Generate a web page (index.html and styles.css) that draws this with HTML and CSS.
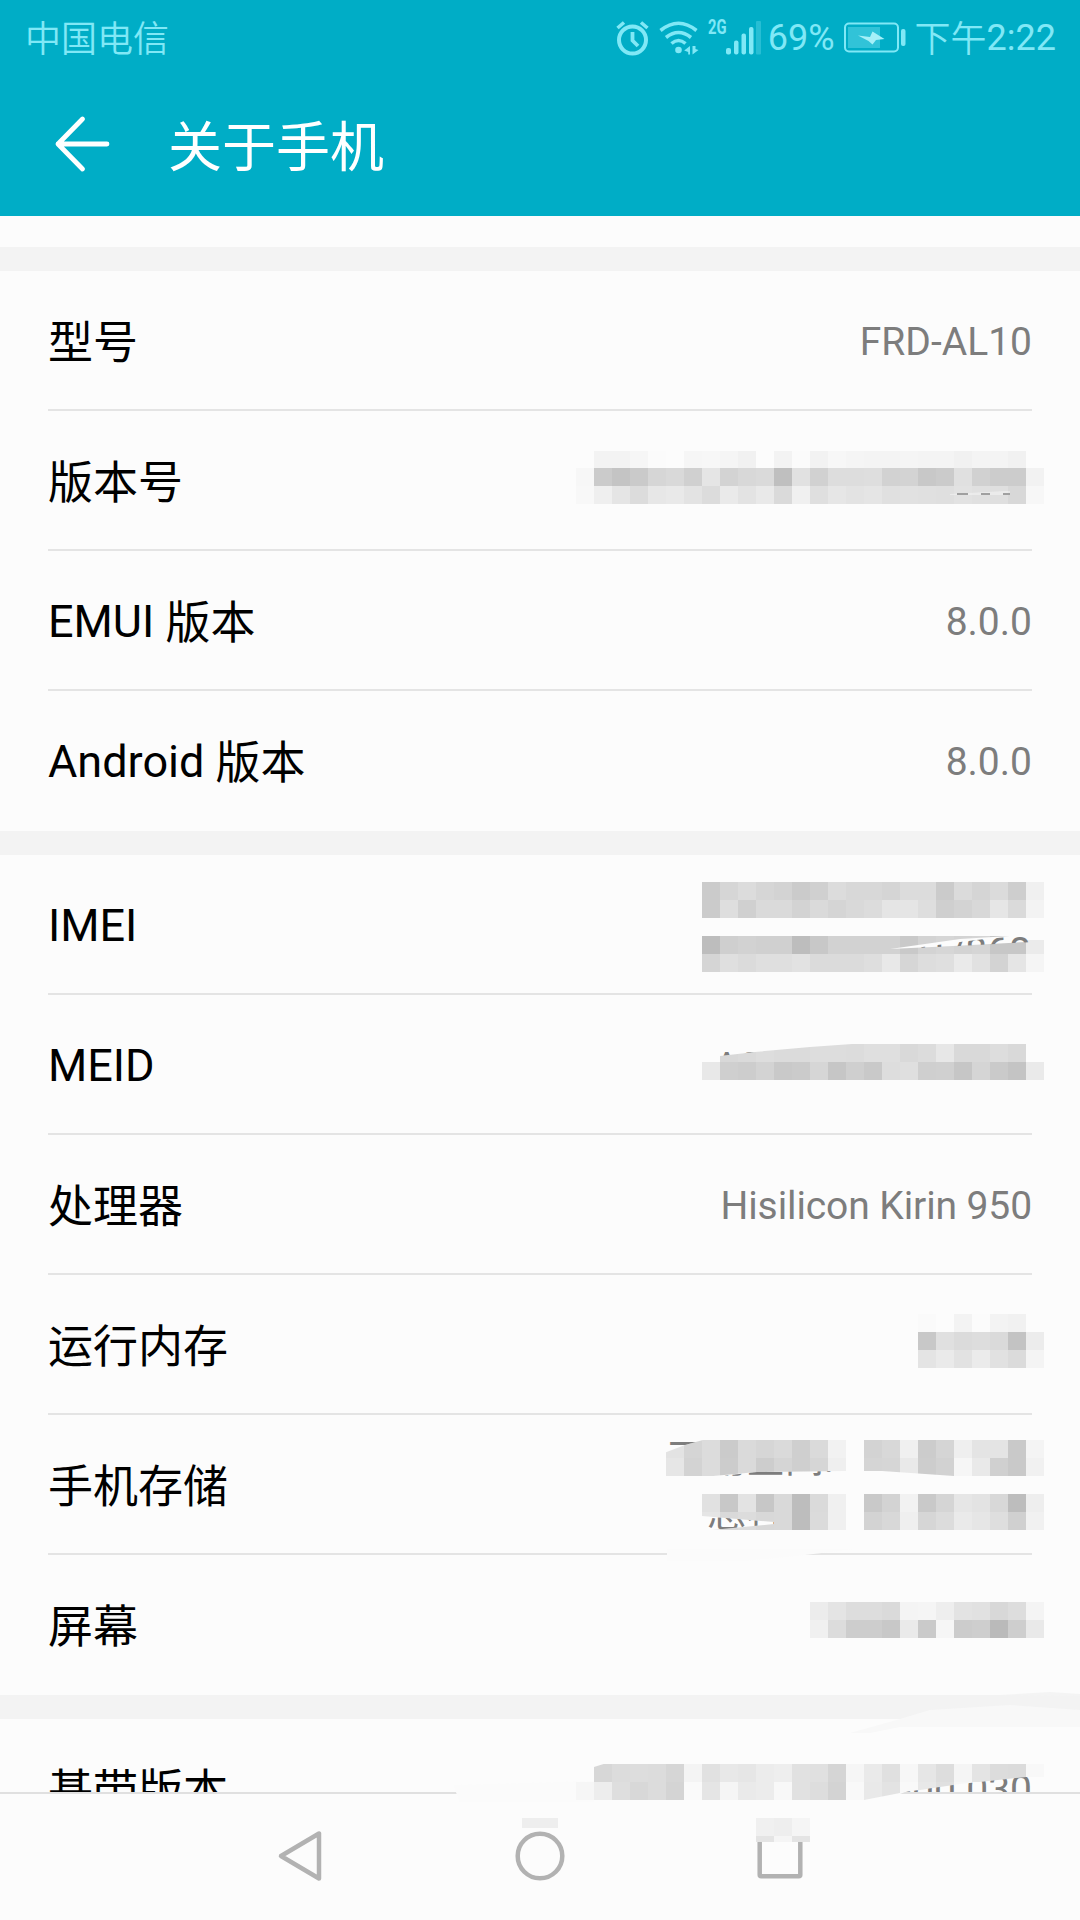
FILE: index.html
```
<!DOCTYPE html>
<html lang="zh-CN">
<head>
    <meta charset="UTF-8">
    <meta name="viewport" content="width=device-width, initial-scale=1.0">
    <title>关于手机</title>
    <link rel="stylesheet" href="styles.css">
</head>
<body>
    <header class="header">
        <div class="status-bar">
            <span class="carrier"><span class="zh">中国电信</span></span>
            <div class="status-icons">
                <svg class="icon-alarm" width="34" height="36" viewBox="0 0 34 36" fill="none" stroke="currentColor" stroke-width="4">
                    <circle cx="16.5" cy="19" r="13.5"/>
                    <path d="M16.5 11v8.500l5.500 5.500" stroke-width="3.800"/>
                    <path d="M1.500 7l6.500-5.500M31.500 7L25 1.500" stroke-width="3.600"/>
                </svg>
                <svg class="icon-wifi" width="40" height="36" viewBox="0 0 40 36" fill="none" stroke="currentColor" stroke-width="3.600">
                    <path d="M1.500 9.500Q19.500-5 37.500 9.500"/>
                    <path d="M7 16.500Q19.500 6.500 32 16.500"/>
                    <path d="M12.500 22.500Q19.500 16.500 26.500 22.500"/>
                    <circle cx="19.500" cy="29" r="3.300" fill="currentColor" stroke="none"/>
                    <path d="M31 25v8.500h-1.800v-2.500l-4-1.500zM33.500 25v8.500l6-4.500-3-1v-3z" fill="currentColor" stroke="none"/>
                </svg>
                <span class="network">2G</span>
                <svg class="icon-signal" width="36" height="36" viewBox="0 0 36 36" fill="currentColor">
                    <rect x="0" y="27" width="5" height="6.500" rx="2"/>
                    <rect x="8" y="19.500" width="4.500" height="14" rx="2"/>
                    <rect x="15.500" y="12.500" width="4.500" height="21" rx="2"/>
                    <rect x="23" y="6" width="4.500" height="27.500" rx="2"/>
                    <rect x="30" y="0" width="5" height="33.500" rx="1" opacity=".3"/>
                </svg>
                <span class="percent">69%</span>
                <svg class="icon-battery" width="63" height="36" viewBox="0 0 63 36">
                    <rect x="1" y="2.500" width="53" height="28" rx="4" fill="none" stroke="currentColor" stroke-width="2"/>
                    <rect x="4" y="6" width="32" height="21" fill="currentColor" opacity=".38"/>
                    <path d="M14 14.500l12 1.500 2.500-5.500 12 7.500-8.500 1-3.500 4.500-4-3.500z" fill="#a6f0f8"/>
                    <rect x="57" y="8" width="4.500" height="17" rx="2" fill="currentColor"/>
                </svg>
                <span class="time"><span class="zh">下午</span>2:22</span>
            </div>
        </div>
        <div class="title-bar">
            <svg class="icon-back" width="58" height="58" viewBox="0 0 58 58" fill="none" stroke="#fff" stroke-width="4.800" stroke-linecap="round" stroke-linejoin="round">
                <path d="M28.500 4L4 29l24.500 25M4 29h49"/>
            </svg>
            <h1>关于手机</h1>
        </div>
    </header>

    <main class="content">
        <section class="group">
            <div class="row"><span class="label"><span class="zh">型号</span></span><span class="value">FRD-AL10</span></div>
            <div class="row"><span class="label"><span class="zh">版本号</span></span></div>
            <div class="row"><span class="label">EMUI <span class="zh">版本</span></span><span class="value">8.0.0</span></div>
            <div class="row"><span class="label">Android <span class="zh">版本</span></span><span class="value">8.0.0</span></div>
        </section>
        <section class="group">
            <div class="row"><span class="label">IMEI</span></div>
            <div class="row"><span class="label">MEID</span></div>
            <div class="row"><span class="label"><span class="zh">处理器</span></span><span class="value cpu">Hisilicon Kirin 950</span></div>
            <div class="row"><span class="label"><span class="zh">运行内存</span></span></div>
            <div class="row"><span class="label"><span class="zh">手机存储</span></span></div>
            <div class="row"><span class="label"><span class="zh">屏幕</span></span></div>
        </section>
        <section class="group">
            <div class="row"><span class="label"><span class="zh">基带版本</span></span></div>
        </section>
    </main>

    <nav class="nav-bar">
        <svg width="50" height="56" viewBox="0 0 50 56"><path d="M43 5.500v45L5 28z"/></svg>
        <svg width="56" height="56" viewBox="0 0 56 56"><circle cx="28" cy="28" r="22.300"/></svg>
        <svg width="56" height="56" viewBox="0 0 56 56"><rect x="5.700" y="7.700" width="40.600" height="40.600" rx="1.500"/></svg>
    </nav>

    <!-- Pixelated censoring over the private values -->
    <svg class="censor" width="1080" height="1920" viewBox="0 0 1080 1920">
        <defs>
            <clipPath id="clipImei"><path d="M915 948l45-6 33-4 40-2v6l-73 4z"/></clipPath>
            <clipPath id="clipMeid"><path d="M702 1044h163l-55 3-55 5-35 4h-18z"/></clipPath>
            <clipPath id="clipStorage"><path d="M666 1438h44l-25 7-19 7zM722 1476l35-4 89-1h36l72 5v4H722z"/></clipPath>
            <clipPath id="clipTotal"><path d="M702 1516l72 6v2l-62 6h-10z"/></clipPath>
            <clipPath id="clipBase"><path d="M905 1792l55-8 66-7h18v15z"/></clipPath>
        </defs>
        <path class="smear" d="M667 1549h188l-50 6-60 6h-78zM453 1785l141-4v21H460zM594 1790h310v10H594z"/>
        <path d="M1080 1727V1710l-70-5-80 5-30 9-50 14h20l30-6z" fill="#f8f8f8"/>
        <path d="M1000 1695l50-3 30 2v2z" fill="#f4f4f4"/>
        <g id="mosaic" shape-rendering="crispEdges"></g>
        <g class="bare">
            <path d="M950 494l55-3h5v4h-60z" opacity=".4"/>
            <path d="M890 949l70-10 33-2 33-2v7l-73 4z"/>
            <path d="M702 1044h150l-42 3-55 5-35 4h-18z"/>
            <path d="M664 1438h46l-25 7-21 8zM702 1477l55-5 89-1h36l72 5H702z"/>
            <path d="M702 1516l72 6v2l-62 6h-10z"/>
            <path d="M590 1762h20l-16 5zM864 1800l36-7 60-9 66-7h18v23z"/>
        </g>
        <path d="M905 1792h175v2H900z" fill="#e0e0e0"/>
        <path d="M957 494h11M981 494h9M1003 494h7" stroke="#a0a0a0" stroke-width="2"/>
        <g class="glimpse">
            <text x="1031" y="965" text-anchor="end" clip-path="url(#clipImei)">01/868</text>
            <text x="714" y="1080" clip-path="url(#clipMeid)">A0</text>
            <text x="668" y="1472" clip-path="url(#clipStorage)">可用空间:</text>
            <text x="707" y="1526" clip-path="url(#clipTotal)">总容量:</text>
            <text x="1032" y="1803" text-anchor="end" clip-path="url(#clipBase)">000.030</text>
        </g>
    </svg>

    <script>
        // Each line: start x, y, row height, gray level of every 18px cell (-- is an empty cell)
        const cells = [
            [576, 451, 17, '-- f3 f3 f6 fb -- f6 f7 f5 f1 -- f3 fb f2 f7 f5 f4 f4 f5 f4 f4 f1 f4 f4 f1 --'],
            [576, 468, 18, 'f7 cb c4 ca d6 d9 d0 e5 d3 d8 da bf e1 d1 dd dd de d2 d3 c8 cb e0 d1 cc cc f2'],
            [576, 486, 18, 'f8 ef e5 dc e7 e9 e3 dc ea e3 e9 da f0 df e6 e3 e5 e0 e1 e0 df e2 e0 df d8 f7'],
            [702, 882, 18, 'cb d6 dc d6 d3 cb d0 dc d8 d8 d5 dc dc cb db d5 db ce f0'],
            [702, 900, 18, 'cb de d0 da da d3 da d5 d9 dc e5 e5 de cf d3 d8 e6 da f3'],
            [702, 936, 18, 'bd cf d2 d0 d0 bd c8 d2 d2 d2 d2 c9 d3 d6 d3 d5 c7 c7 --'],
            [1026, 940, 14, 'eb'],
            [702, 954, 18, 'd5 df db df df e2 db db db de e8 d6 dd df ea e1 d3 e5 f5'],
            [702, 1044, 18, '-- d8 da dd db db dd dd dc df df d9 dc e7 d9 d9 dd d9 --'],
            [702, 1062, 18, 'e8 cf cd d3 c9 cb d6 c6 cf c9 dd df cf d0 c6 d5 ca c4 ea'],
            [918, 1314, 18, 'fa -- f3 fb f3 f1 --'],
            [918, 1332, 18, 'c8 e0 db dd da c3 ec'],
            [918, 1350, 18, 'e4 ea e2 eb e1 db f4'],
            [666, 1440, 18, 'e3 d5 dc cb da d6 da cf da f2 -- d3 d8 f0 cc d5 ef e4 e4 c9 f4'],
            [666, 1458, 18, 'e6 d3 dc cc da cd d5 cf d6 ef -- d5 d6 e9 cd d2 f6 e9 d0 c9 f1'],
            [702, 1494, 18, 'e1 c8 e3 c7 d9 bd da f0 -- c9 d3 f2 c9 d5 e6 e3 d8 bd ee'],
            [702, 1512, 18, 'e5 d9 dc d8 d9 bd db f0 -- d3 d8 ef d6 dc ea e6 de d0 f1'],
            [810, 1602, 18, 'ec e4 dd dd da f4 f5 ee e3 e1 d8 dd f4'],
            [810, 1620, 18, 'f0 dc cd cd c8 ea ca f6 cc ce ba ce e9'],
            [594, 1764, 18, 'd7 dc dd dc d6 f4 e1 e8 e6 ec ee e1 e0 d5 f6 ea e0 f7 e6 dd f5 e4 dc db f8'],
            [576, 1782, 18, 'f6 ed de d8 dc d4 fa e5 f5 ea ec f8 e1 dd d3 f9 e9 e3 f9 e8 e0 f7'],
            [522, 1818, 10, 'ee ee'],
            [756, 1818, 18, 'f0 ee f5'],
            [756, 1836, 6, 'e4 f5 e4']
        ];

        const mosaic = document.getElementById('mosaic');
        cells.forEach(([x, y, height, levels]) => {
            levels.split(' ').forEach((level, i) => {
                if (level === '--') return;
                const rect = document.createElementNS('http://www.w3.org/2000/svg', 'rect');
                rect.setAttribute('x', x + i * 18);
                rect.setAttribute('y', y);
                rect.setAttribute('width', 18);
                rect.setAttribute('height', height);
                rect.setAttribute('fill', '#' + level + level + level);
                mosaic.appendChild(rect);
            });
        });
    </script>
</body>
</html>
```
FILE: styles.css
```
:root {
    --primary-color: #00adc6;
    --status-color: #80e8f6;
    --background-color: #fcfcfc;
    --band-color: #f3f3f3;
    --line-color: #e4e4e4;
    --value-color: #7d7d7d;
}

* {
    box-sizing: border-box;
}

body {
    font-family: Roboto, 'Noto Sans CJK SC', sans-serif;
    margin: 0;
    width: 1080px;
    height: 1920px;
    position: relative;
    overflow: hidden;
    background-color: var(--background-color);
    display: flex;
    flex-direction: column;
}

/* Chinese glyphs sit slightly lower than the Latin ones */
.zh {
    line-height: 1;
    vertical-align: -2px;
}

.header {
    height: 216px;
    flex-shrink: 0;
    background-color: var(--primary-color);
}

.status-bar {
    height: 72px;
    padding: 5px 24px 0 25px;
    display: flex;
    justify-content: space-between;
    align-items: center;
    color: var(--status-color);
    font-size: 36px;
    line-height: 67px;
}

.carrier .zh,
.time .zh {
    font-weight: 350;
}

.status-icons {
    display: flex;
    align-items: center;
}

.status-icons svg {
    flex-shrink: 0;
}

.icon-wifi {
    margin-left: 9px;
}

.network {
    font-family: Roboto, sans-serif;
    font-size: 20px;
    font-weight: 700;
    line-height: 20px;
    width: 18px;
    margin: 0 0 23px 9px;
    transform: scaleX(0.74);
    transform-origin: left;
}

.percent {
    margin-left: 6px;
}

.icon-battery {
    margin-left: 9px;
}

.time {
    margin-left: 8px;
}

.title-bar {
    height: 144px;
    padding-left: 54px;
    display: flex;
    align-items: center;
}

.title-bar h1 {
    margin: 10px 0 0 56px;
    color: #fff;
    font-size: 54px;
    font-weight: 400;
    line-height: 80px;
}

.content {
    flex: 1;
    min-height: 0;
    padding-top: 31px;
    overflow: hidden;
}

.group {
    border-top: 24px solid var(--band-color);
    padding: 0 48px;
}

.row {
    height: 140px;
    padding-top: 3px;
    display: flex;
    justify-content: space-between;
    align-items: center;
    line-height: 60px;
    border-bottom: 2px solid var(--line-color);
}

.row:last-child {
    border-bottom-color: transparent;
}

.label {
    font-size: 45px;
    color: #000;
}

.value {
    font-size: 39px;
    color: var(--value-color);
}

.cpu {
    letter-spacing: -0.1px;
}

.nav-bar {
    height: 128px;
    flex-shrink: 0;
    border-top: 2px solid #e0e0e0;
    background-color: var(--background-color);
    display: flex;
    justify-content: center;
    align-items: center;
    gap: 186px;
    padding: 0 0 2px 6px;
}

.nav-bar svg {
    fill: none;
    stroke: #b2b2b2;
    stroke-width: 4.5;
    stroke-linejoin: round;
}

.censor {
    position: absolute;
    top: 0;
    left: 0;
    pointer-events: none;
}

.smear {
    fill: #fbfbfb;
}

.bare {
    fill: var(--background-color);
}

.glimpse {
    font-size: 39px;
    fill: var(--value-color);
}
```
